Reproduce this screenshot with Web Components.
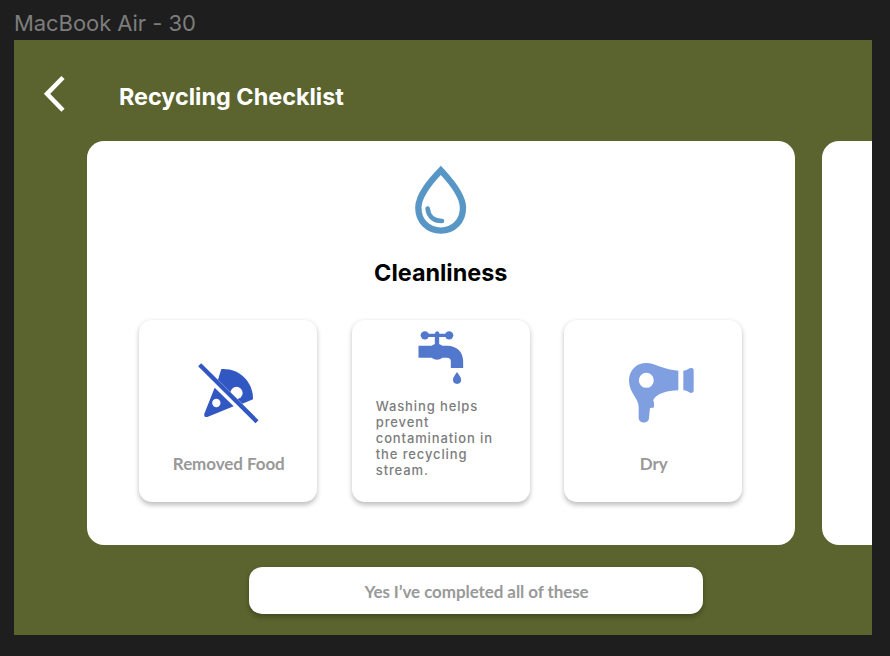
<!DOCTYPE html>
<html lang="en">
<head>
<meta charset="utf-8">
<title>Recycling Checklist</title>
<style>
html,body{margin:0;height:100%;background:#1e1e1e;overflow:hidden}
body{font-family:Inter,"Liberation Sans",sans-serif}
</style>
</head>
<body>
<canvas-frame label="MacBook Air - 30">
  <page-header>Recycling Checklist</page-header>
  <card-carousel>
    <checklist-card heading="Cleanliness">
      <check-tile icon="food">Removed Food</check-tile>
      <check-tile icon="tap" info>Washing helps prevent contamination in the recycling stream.</check-tile>
      <check-tile icon="dryer">Dry</check-tile>
    </checklist-card>
    <blank-card></blank-card>
  </card-carousel>
  <confirm-button>Yes I’ve completed all of these</confirm-button>
</canvas-frame>
<script>
const define = (name, html, setup) => customElements.define(name, class extends HTMLElement {
  connectedCallback() {
    if (this.shadowRoot) return;
    const t = document.createElement('template');
    t.innerHTML = html;
    this.attachShadow({mode: 'open'}).append(t.content.cloneNode(true));
    if (setup) setup(this, this.shadowRoot);
  }
});

const icons = {
  drop: `<svg width="80" height="90" viewBox="2 0 240 270"><path d="M121.500 46C104 65 54 115 54 158C54 199 84 227 121.500 227C159 227 188 199 188 158C188 115 139 65 121.500 46Z" fill="none" stroke="#5896c5" stroke-width="19"/><path d="M82 161C84 184 100 198 125 198" fill="none" stroke="#5896c5" stroke-width="14" stroke-linecap="round"/></svg>`,
  food: `<svg width="90" height="85" viewBox="-6 0 270 255"><g fill="#3157c2"><path d="M109 57C162 54 205 94 204 148L172 161L99 89Z"/><path fill-rule="evenodd" d="M89 113L146 169L67 201Q56 203 58 191ZM94 146.500A12.500 12.500 0 1 0 94 171.500A12.500 12.500 0 1 0 94 146.500Z"/></g><circle cx="154.500" cy="129" r="18.500" fill="#fff"/><path d="M44 44L216 215" stroke="#3157c2" stroke-width="13"/></svg>`,
  tap: `<svg width="90" height="75" viewBox="-12.500 0 270 225"><g fill="#5278cd"><circle cx="74" cy="46" r="12.500"/><circle cx="147" cy="46" r="12.500"/><path d="M74 41H104Q106 34 111 34Q116 34 118 41H147V51H117V72L127 77H141C170 77 189 96 189 124V144H152V124Q152 113 140 113H127Q111 125 94 113H55V77H94L104 72V51H74Z"/><path d="M170.500 156C177 166 183 172 183 179.500A12.300 12.300 0 0 1 158.400 179.500C158.400 172 164 166 170.500 156Z"/></g></svg>`,
  dryer: `<svg width="90" height="85" viewBox="-21 0 270 255"><g fill="#7f9fe0"><path fill-rule="evenodd" d="M94 39C121 39 143 59 190 62V121C155 122 123 132 115 150V155H117V172Q115 174 105 174L102 204C101 222 72 222 71 204V171C71 144 42 130 42 91C42 61 64 39 94 39ZM94 68.500A22.500 22.500 0 1 0 94 113.500A22.500 22.500 0 1 0 94 68.500Z"/><path d="M205 62C217 62 222 53 229 54Q236 54 236 59V123Q236 128 229 129C222 129 217 121 205 121Z"/></g></svg>`
};

define('canvas-frame', `<style>
:host{display:flex;flex-direction:column;box-sizing:border-box;width:890px;height:656px;padding:0 18.500px 21px 14px}
.label{height:39.500px;box-sizing:border-box;padding-top:9.500px;font-size:22px;line-height:27px;letter-spacing:-.06px;color:#7d7d7d;white-space:nowrap}
.board{flex:1;background:#5b632e;overflow:hidden;display:flex;flex-direction:column}
</style><div class="label"></div><div class="board"><slot></slot></div>`,
(el, r) => { r.querySelector('.label').textContent = el.getAttribute('label'); });

define('page-header', `<style>
:host{display:flex;height:101.800px;flex:none;box-sizing:border-box;padding:35.500px 0 0 29px;color:#fff;font-size:23.400px;font-weight:700}
svg{flex:none;margin-right:54px}
h1{font:inherit;margin:7px 0 0;line-height:29px;white-space:nowrap}
</style><svg width="22" height="38" viewBox="0 0 22 38"><path d="M20 2.500L4 18.800L20 35.300" fill="none" stroke="#fff" stroke-width="4.500"/></svg><h1><slot></slot></h1>`);

define('card-carousel', `<style>
:host{display:flex;gap:26.700px;padding-left:72.500px;height:404px;flex:none}
</style><slot></slot>`);

define('checklist-card', `<style>
:host{display:flex;flex-direction:column;align-items:center;flex:none;box-sizing:border-box;width:708.500px;height:404px;padding-top:13.700px;border-radius:17px;background:#fff}
svg{display:block}
h2{margin:13px 0 0;font-size:23.400px;line-height:30px;font-weight:700;color:#000}
.tiles{display:flex;gap:34.500px;margin-top:32px}
</style><div class="icon">${icons.drop}</div><h2></h2><div class="tiles"><slot></slot></div>`,
(el, r) => { r.querySelector('h2').textContent = el.getAttribute('heading'); });

define('blank-card', `<style>:host{display:block;flex:none;width:708px;height:404px;border-radius:17px;background:#fff}</style>`);

define('check-tile', `<style>
:host{display:flex;flex-direction:column;align-items:center;box-sizing:border-box;width:178px;height:182px;padding-top:30px;border-radius:13px;background:#fff;box-shadow:0 2.500px 5px rgba(0,0,0,.26)}
:host([info]){padding-top:0}
svg{display:block}
.text{margin-top:18.500px;padding-left:1px;font:700 17px/21px Lato,sans-serif;letter-spacing:-.08px;color:#999}
:host([info]) .text{margin-top:3px;padding:0;width:130px;font:500 13px/16px Inter,sans-serif;letter-spacing:.88px;color:#7c7c7c}
</style><div class="icon"></div><div class="text"><slot></slot></div>`,
(el, r) => { r.querySelector('.icon').innerHTML = icons[el.getAttribute('icon')]; });

define('confirm-button', `<style>
:host{display:block;margin:21.300px 0 0 235px}
button{display:block;width:454px;height:47px;padding:3px 0 0 1px;border:0;border-radius:13px;background:#fff;box-shadow:0 2.500px 5px rgba(0,0,0,.26);font:700 17px/21px Lato,sans-serif;letter-spacing:-.08px;color:#999}
</style><button><slot></slot></button>`);
</script>
</body>
</html>
